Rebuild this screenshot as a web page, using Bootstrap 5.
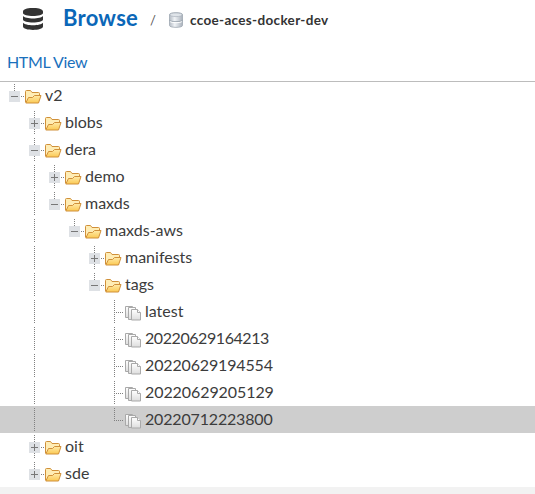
<!DOCTYPE html>
<html lang="en">
<head>
<meta charset="utf-8">
<meta name="viewport" content="width=device-width, initial-scale=1">
<title>Browse</title>
<link href="https://cdn.jsdelivr.net/npm/bootstrap@5.3.0/dist/css/bootstrap.min.css" rel="stylesheet">
<style>
body{font-family:Lato,"Open Sans",sans-serif;font-size:16px;color:#3c3c3c;background:#f2f2f2;overflow:hidden}
.page-head{height:42px;padding-left:23px}
.db-icon{margin-top:8px}
.page-title{font-size:22px;font-weight:700;color:#0b67b8;width:76px;margin-left:20px;line-height:36px;letter-spacing:.25px}
.slash{font-size:13px;margin-left:11px;width:19px;line-height:40px;color:#555}
.repo-icon{margin-top:12px}
.repo-name{font-size:13.5px;font-weight:700;color:#333;line-height:40px;margin-left:7px;letter-spacing:.33px}
.view-link{height:39px;padding:8px 0 0 7px;color:#1a70bc;line-height:24px;letter-spacing:-.35px}
.tree{border-top:1px solid #bcbcbc}
.tree-row{height:27px;padding-left:4px;line-height:26px;white-space:nowrap}
.selected{background:#cecece}
.cell{width:20px;height:27px;flex:none}
.glyph{width:17px;height:17px;margin:6px 3px 0 1px;flex:none}
.guide{stroke:#808080;stroke-dasharray:1 1;fill:none}
.n1{letter-spacing:-.43px}.n2{letter-spacing:-.15px}.n3{letter-spacing:-.08px}.n4{letter-spacing:-.17px}
</style>
</head>
<body>
<svg width="0" height="0" class="position-absolute" aria-hidden="true">
<defs>
<linearGradient id="gold" x2="0" y2="1"><stop stop-color="#ffeaa8"/><stop offset="1" stop-color="#fbc953"/></linearGradient>
<linearGradient id="silver"><stop stop-color="#b3bac3"/><stop offset=".4" stop-color="#f0f3f6"/><stop offset="1" stop-color="#a9b1bb"/></linearGradient>
<linearGradient id="paper" x2="0" y2="1"><stop stop-color="#fff"/><stop offset="1" stop-color="#ddd"/></linearGradient>
</defs>
<symbol id="v" viewBox="0 0 20 27"><path class="guide" d="M10.500 2V26"/></symbol>
<symbol id="minus" viewBox="0 0 20 27"><path class="guide" d="M10.500 2V26M17 14.500h3"/><path fill="#dee1e5" d="M5 9h11v11H5z"/><path stroke="#777" d="M7 14.500h7"/></symbol>
<symbol id="minus-last" viewBox="0 0 20 27"><path class="guide" d="M10.500 2V9M17 14.500h3"/><path fill="#dee1e5" d="M5 9h11v11H5z"/><path stroke="#777" d="M7 14.500h7"/></symbol>
<symbol id="plus" viewBox="0 0 20 27"><path class="guide" d="M10.500 2V26M17 14.500h3"/><path fill="#dee1e5" d="M5 9h11v11H5z"/><path stroke="#777" d="M7 14.500h7M10.500 11v7"/></symbol>
<symbol id="plus-last" viewBox="0 0 20 27"><path class="guide" d="M10.500 2V9M17 14.500h3"/><path fill="#dee1e5" d="M5 9h11v11H5z"/><path stroke="#777" d="M7 14.500h7M10.500 11v7"/></symbol>
<symbol id="leaf" viewBox="0 0 20 27"><path class="guide" d="M10.500 2V26M12 14.500h8"/></symbol>
<symbol id="leaf-last" viewBox="0 0 20 27"><path class="guide" d="M10.500 2V15M12 14.500h8"/></symbol>
<symbol id="folder" viewBox="0 0 17 17"><path fill="#ffedb5" stroke="#d0903a" stroke-linejoin="round" d="M.5 14V3.500q0-1 1-1h4L7 4.500h6.500q1 0 1 1V8L12 14z"/><path fill="url(#gold)" stroke="#d0903a" stroke-linejoin="round" d="M.8 15 3.500 9.500h4L9.500 7.500h6.500L13.500 15z"/></symbol>
<symbol id="docs" viewBox="0 0 17 17"><g fill="url(#paper)" stroke="#a9a9a9"><path d="M.5 2.500h7v11h-7z"/><path d="M3.500 3.500h7v12h-7z"/><path d="M6.500 5.500h6l3 3v7.500h-9z"/><path fill="#fff" d="M12.500 5.500v3h3"/></g></symbol>
</svg>
<div class="bg-white">
<header class="page-head d-flex align-items-start">
<svg class="db-icon" width="20" height="22" viewBox="0 0 20 22"><path fill="#333" d="M0 3.500C0-1.200 20-1.200 20 3.500V5C20 9 0 9 0 5zM0 8c2 3.300 18 3.300 20 0v3.500c0 4-20 4-20 0zM0 14.800c2 3.300 18 3.300 20 0V18.500c0 4.500-20 4.500-20 0z"/></svg>
<h1 class="page-title mb-0">Browse</h1><span class="slash">/</span>
<svg class="repo-icon" width="14" height="16" viewBox="0 0 14 16"><path fill="url(#silver)" stroke="#9fa8b2" stroke-width=".8" d="M.5 2.500C.5 0 13.500 0 13.500 2.500v11c0 2.500-13 2.500-13 0z"/><ellipse cx="7" cy="2.800" rx="6.200" ry="1.800" fill="#dfe4e9" stroke="#a5adb7" stroke-width=".6"/><path fill="none" stroke="#8f99a5" stroke-width=".8" d="M.5 8.300c1 1.800 12 1.800 13 0"/><path fill="none" stroke="#fff" d="M1 9.400c1 1.700 11 1.700 12 0"/></svg>
<span class="repo-name">ccoe-aces-docker-dev</span>
</header>
<div class="view-link">HTML View</div>
<div class="tree">
<div class="tree-row d-flex"><svg class="cell"><use href="#minus-last"/></svg><svg class="glyph"><use href="#folder"/></svg><span>v2</span></div>
<div class="tree-row d-flex"><div class="cell"></div><svg class="cell"><use href="#plus"/></svg><svg class="glyph"><use href="#folder"/></svg><span>blobs</span></div>
<div class="tree-row d-flex"><div class="cell"></div><svg class="cell"><use href="#minus"/></svg><svg class="glyph"><use href="#folder"/></svg><span>dera</span></div>
<div class="tree-row d-flex"><div class="cell"></div><svg class="cell"><use href="#v"/></svg><svg class="cell"><use href="#plus"/></svg><svg class="glyph"><use href="#folder"/></svg><span>demo</span></div>
<div class="tree-row d-flex"><div class="cell"></div><svg class="cell"><use href="#v"/></svg><svg class="cell"><use href="#minus-last"/></svg><svg class="glyph"><use href="#folder"/></svg><span>maxds</span></div>
<div class="tree-row d-flex"><div class="cell"></div><svg class="cell"><use href="#v"/></svg><div class="cell"></div><svg class="cell"><use href="#minus-last"/></svg><svg class="glyph"><use href="#folder"/></svg><span>maxds-aws</span></div>
<div class="tree-row d-flex"><div class="cell"></div><svg class="cell"><use href="#v"/></svg><div class="cell"></div><div class="cell"></div><svg class="cell"><use href="#plus"/></svg><svg class="glyph"><use href="#folder"/></svg><span>manifests</span></div>
<div class="tree-row d-flex"><div class="cell"></div><svg class="cell"><use href="#v"/></svg><div class="cell"></div><div class="cell"></div><svg class="cell"><use href="#minus-last"/></svg><svg class="glyph"><use href="#folder"/></svg><span>tags</span></div>
<div class="tree-row d-flex"><div class="cell"></div><svg class="cell"><use href="#v"/></svg><div class="cell"></div><div class="cell"></div><div class="cell"></div><svg class="cell"><use href="#leaf"/></svg><svg class="glyph"><use href="#docs"/></svg><span>latest</span></div>
<div class="tree-row d-flex"><div class="cell"></div><svg class="cell"><use href="#v"/></svg><div class="cell"></div><div class="cell"></div><div class="cell"></div><svg class="cell"><use href="#leaf"/></svg><svg class="glyph"><use href="#docs"/></svg><span class="n1">20220629164213</span></div>
<div class="tree-row d-flex"><div class="cell"></div><svg class="cell"><use href="#v"/></svg><div class="cell"></div><div class="cell"></div><div class="cell"></div><svg class="cell"><use href="#leaf"/></svg><svg class="glyph"><use href="#docs"/></svg><span class="n2">20220629194554</span></div>
<div class="tree-row d-flex"><div class="cell"></div><svg class="cell"><use href="#v"/></svg><div class="cell"></div><div class="cell"></div><div class="cell"></div><svg class="cell"><use href="#leaf"/></svg><svg class="glyph"><use href="#docs"/></svg><span class="n3">20220629205129</span></div>
<div class="tree-row d-flex selected"><div class="cell"></div><svg class="cell"><use href="#v"/></svg><div class="cell"></div><div class="cell"></div><div class="cell"></div><svg class="cell"><use href="#leaf-last"/></svg><svg class="glyph"><use href="#docs"/></svg><span class="n4">20220712223800</span></div>
<div class="tree-row d-flex"><div class="cell"></div><svg class="cell"><use href="#plus"/></svg><svg class="glyph"><use href="#folder"/></svg><span>oit</span></div>
<div class="tree-row d-flex"><div class="cell"></div><svg class="cell"><use href="#plus-last"/></svg><svg class="glyph"><use href="#folder"/></svg><span>sde</span></div>
</div>
</div>
<script src="https://cdn.jsdelivr.net/npm/bootstrap@5.3.0/dist/js/bootstrap.bundle.min.js"></script>
</body>
</html>
